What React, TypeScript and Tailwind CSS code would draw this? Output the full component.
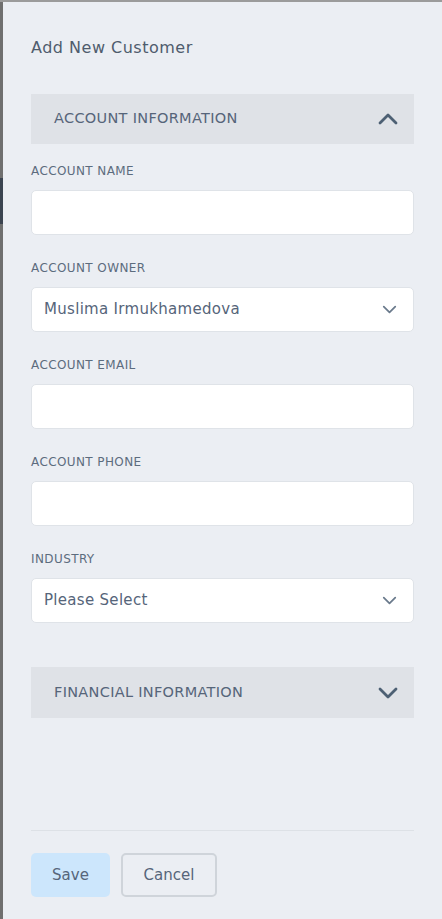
import { ChevronDown, ChevronUp } from "lucide-react";

const font = { fontFamily: '"DejaVu Sans", "Open Sans", sans-serif' };

function Field({ label, value, select }: { label: string; value?: string; select?: boolean }) {
  return (
    <div className="mb-[25px]">
      <div className="h-[16px] text-[12px] leading-[16px] tracking-[0.4px] text-[#5c6c7e] mb-[11px]">{label}</div>
      <div className="h-[45px] bg-white border border-[#dfe3e8] rounded-[5px] flex items-center justify-between pl-[12px] pr-[12px]">
        <span className="text-[15px] tracking-[0.3px] text-[#56657a]">{value}</span>
        {select && <ChevronDown className="w-[23px] h-[23px] text-[#6a7a8c]" strokeWidth={1.8} />}
      </div>
    </div>
  );
}

export default function App() {
  return (
    <div className="w-[442px] h-[919px] flex bg-[#9b9b9b] pt-[2px]" style={font}>
      {/* left edge of the page behind the drawer */}
      <div className="w-[3px] flex flex-col bg-[#6f6f6f]">
        <div className="h-[176px]" />
        <div className="h-[46px] bg-[#3b4450]" />
      </div>

      <div className="flex-1 bg-[#ebeef3] flex flex-col px-[28px]">
        <h1 className="mt-[34px] h-[24px] text-[16px] leading-[24px] tracking-[0.5px] text-[#4f5c6d]">Add New Customer</h1>

        <div className="mt-[34px] h-[50px] bg-[#dfe2e7] flex items-center justify-between pl-[23px] pr-[10px]">
          <span className="text-[14.5px] tracking-[0.3px] text-[#56657a]">ACCOUNT INFORMATION</span>
          <ChevronUp className="w-[32px] h-[32px] text-[#4d6074]" strokeWidth={2.1} />
        </div>

        <div className="mt-[19px]">
          <Field label="ACCOUNT NAME" />
          <Field label="ACCOUNT OWNER" value="Muslima Irmukhamedova" select />
          <Field label="ACCOUNT EMAIL" />
          <Field label="ACCOUNT PHONE" />
          <Field label="INDUSTRY" value="Please Select" select />
        </div>

        <div className="mt-[19px] h-[51px] bg-[#dfe2e7] flex items-center justify-between pl-[23px] pr-[10px]">
          <span className="text-[14.5px] tracking-[0.3px] text-[#56657a]">FINANCIAL INFORMATION</span>
          <ChevronDown className="w-[32px] h-[32px] text-[#4d6074]" strokeWidth={2.1} />
        </div>

        <div className="flex-1" />

        <div className="border-t border-[#dde1e6] pt-[22px] pb-[22px] flex gap-[11px]">
          <button className="w-[79px] h-[44px] rounded-[5px] bg-[#cce6fc] text-[15px] text-[#56657a]">Save</button>
          <button className="w-[96px] h-[44px] rounded-[5px] border-2 border-[#cfd4da] text-[15px] text-[#56657a]">Cancel</button>
        </div>
      </div>
    </div>
  );
}
